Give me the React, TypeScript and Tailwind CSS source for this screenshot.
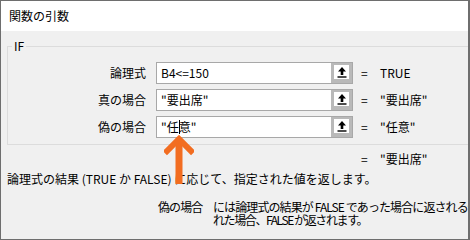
import React from 'react'

const rows = [
  { label: '論理式', value: 'B4<=150', result: 'TRUE' },
  { label: '真の場合', value: '"要出席"', result: '"要出席"' },
  { label: '偽の場合', value: '"任意"', result: '"任意"', caret: true },
]

const PickIcon: React.FC = () => (
  <svg width="10" height="11" viewBox="0 0 10 11">
    <path d="M5 0 L9 4.5 L6.3 4.5 L6.3 8 L3.7 8 L3.7 4.5 L1 4.5 Z" fill="#000" />
    <rect x="0.5" y="9.3" width="9" height="1.4" fill="#000" />
  </svg>
)

const ArgInput: React.FC<{ value: string; caret?: boolean }> = ({ value, caret }) => (
  <div className="flex h-[22px] w-[197px] border border-[#a8a8a8] bg-white">
    <div className="flex flex-1 items-center pl-[4px] leading-[14px] whitespace-nowrap">
      {caret ? (
        <>
          <span>"任</span>
          <span className="inline-block h-[14px] w-px -mr-px bg-black" />
          <span>意"</span>
        </>
      ) : (
        value
      )}
    </div>
    <div className="flex w-[21px] shrink-0 items-start justify-center bg-[#b9b9b9] pt-[2px]">
      <div className="flex h-[14px] w-[15px] items-center justify-center bg-white">
        <PickIcon />
      </div>
    </div>
  </div>
)

export default function App() {
  return (
    <div className="relative flex h-[240px] w-[470px] flex-col overflow-hidden border border-r-2 border-[#6e6e6e] bg-[#f0f0f0] font-['Noto_Sans_CJK_JP',sans-serif] text-[12px] text-black">
      <div className="flex h-[30px] shrink-0 items-center bg-white pl-[8px]">関数の引数</div>

      <div className="flex flex-col pl-[6px]">
        <fieldset className="mt-[8px] w-[480px] border border-[#dcdcdc] pt-[9px] pb-[6px]">
          <legend className="ml-[4px] px-[2px] leading-[14px]">IF</legend>
          <div className="grid grid-cols-[139px_197px_auto] items-center gap-y-[5px]">
            {rows.map((r) => (
              <React.Fragment key={r.label}>
                <div className="pr-[1px] text-right leading-[14px]">{r.label}</div>
                <div className="ml-[9px]">
                  <ArgInput value={r.value} caret={r.caret} />
                </div>
                <div className="ml-[17px] flex leading-[14px]">
                  <span className="w-[19px]">=</span>
                  <span>{r.result}</span>
                </div>
              </React.Fragment>
            ))}
          </div>
        </fieldset>

        <div className="mt-[6px] ml-[354px] flex leading-[15px]">
          <span className="w-[19px]">=</span>
          <span>"要出席"</span>
        </div>

        <div className="mt-[5px] leading-[15px] whitespace-nowrap">
          論理式の結果 (TRUE か FALSE) に応じて、指定された値を返します。
        </div>

        <div className="mt-[14px] ml-[151px] flex leading-[13px] tracking-[-0.9px]">
          <span className="w-[55px] shrink-0">偽の場合</span>
          <div className="flex flex-col whitespace-nowrap">
            <span>には論理式の結果が FALSE であった場合に返される値を指定します。省略さ</span>
            <span className="tracking-[-1.4px]">れた場合、FALSE が返されます。</span>
          </div>
        </div>
      </div>

      <svg className="absolute left-[163px] top-[133px]" width="30" height="52" viewBox="0 0 30 52">
        <path d="M15 5 L15 50" stroke="#f26d21" strokeWidth="7" fill="none" />
        <path d="M3 17 L15 5 L27 17" stroke="#f26d21" strokeWidth="6" fill="none" strokeLinecap="square" />
      </svg>
    </div>
  )
}
